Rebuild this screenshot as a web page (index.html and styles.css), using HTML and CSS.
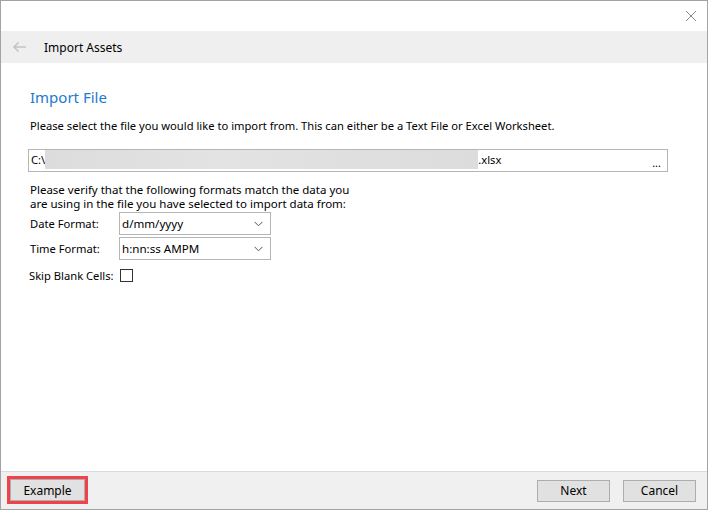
FILE: index.html
```html
<!DOCTYPE html>
<html>
<head>
<meta charset="utf-8">
<link rel="stylesheet" href="styles.css">
</head>
<body>
<div class="window">
  <div class="titlebar">
    <svg class="close" width="12" height="12" viewBox="0 0 12 12"><path d="M1 1 L11 11 M11 1 L1 11" stroke="#8a8a8a" stroke-width="1" fill="none"/></svg>
  </div>
  <div class="header">
    <svg class="back" width="16" height="12" viewBox="0 0 16 12"><path d="M2 6 H14 M6.5 1.5 L2 6 L6.5 10.5" stroke="#c4c4c4" stroke-width="1.6" fill="none"/></svg>
    <span class="htitle">Import Assets</span>
  </div>
  <div class="content">
    <h1 class="heading">Import File</h1>
    <p class="intro">Please select the file you would like to import from. This can either be a Text File or Excel Worksheet.</p>
    <div class="fileinput">
      <span class="ftext first">C:\</span><span class="blur"></span><span class="ftext">.xlsx</span>
      <span class="dots">...</span>
    </div>
    <p class="verify">Please verify that the following formats match the data you<br>are using in the file you have selected to import data from:</p>
    <div class="row">
      <span class="label">Date Format:</span>
      <div class="combo"><span>d/mm/yyyy</span><svg width="9" height="6" viewBox="0 0 9 6"><path d="M0.5 0.8 L4.5 4.8 L8.5 0.8" stroke="#555" stroke-width="1" fill="none"/></svg></div>
    </div>
    <div class="row">
      <span class="label">Time Format:</span>
      <div class="combo"><span>h:nn:ss AMPM</span><svg width="9" height="6" viewBox="0 0 9 6"><path d="M0.5 0.8 L4.5 4.8 L8.5 0.8" stroke="#555" stroke-width="1" fill="none"/></svg></div>
    </div>
    <div class="skip">
      <span class="label2">Skip Blank Cells:</span>
      <span class="check"></span>
    </div>
  </div>
  <div class="footer">
    <div class="hl"><button class="btn">Example</button></div>
    <div class="spacer"></div>
    <button class="btn">Next</button>
    <button class="btn">Cancel</button>
  </div>
</div>
</body>
</html>
```

FILE: styles.css
```css
html, body {
  margin: 0;
  padding: 0;
  background: #ffffff;
}
body {
  font-family: "Noto Sans", "Liberation Sans", sans-serif;
  font-size: 11.2px;
  color: #000;
}
.window {
  width: 706px;
  height: 508px;
  border: 1px solid #a3a3a3;
  display: flex;
  flex-direction: column;
  background: #fff;
}
.titlebar {
  height: 30px;
  display: flex;
  justify-content: flex-end;
  align-items: center;
}
.close {
  margin-right: 10px;
}
.header {
  height: 32px;
  background: #efefef;
  display: flex;
  align-items: center;
}
.back {
  margin-left: 11px;
}
.htitle {
  margin-left: 16px;
  font-size: 12px;
}
.content {
  flex: 1;
  padding: 24px 0 0 29px;
}
.heading {
  margin: 0;
  font-size: 15px;
  font-weight: normal;
  color: #1d79d2;
  line-height: 20px;
}
.intro {
  margin: 11px 0 0 0;
  line-height: 16px;
}
.fileinput {
  margin-top: 15px;
  width: 638px;
  height: 21px;
  border: 1px solid #b5b5b5;
  margin-left: -2px;
  display: flex;
  align-items: flex-start;
}
.ftext {
  line-height: 19px;
}
.ftext.first {
  margin-left: 2px;
}
.blur {
  width: 433px;
  height: 19px;
  background: linear-gradient(90deg, #dcdcdc, #e2e3e2 40%, #dcdcdc);
}
.dots {
  margin-left: auto;
  margin-right: 6px;
  line-height: 25px;
  font-size: 11px;
}
.verify {
  margin: 11px 0 0 0;
  line-height: 14px;
  font-size: 11.5px;
}
.row {
  display: flex;
  align-items: center;
  height: 25px;
}
.label {
  width: 89px;
}
.combo {
  border: 1px solid #b5b5b5;
  display: flex;
  align-items: center;
  justify-content: space-between;
  padding: 0 7px 0 2px;
  box-sizing: border-box;
  width: 152px;
  height: 23px;
  font-size: 11.6px;
}
.skip {
  display: flex;
  align-items: center;
  height: 28px;
}
.label2 {
  margin-left: -1px;
  width: 91px;
}
.check {
  width: 11px;
  height: 11px;
  border: 1px solid #333;
}
.footer {
  height: 37px;
  border-top: 1px solid #dadada;
  background: #f0f0f0;
  display: flex;
  align-items: center;
  padding: 0 11px 0 6px;
}
.hl {
  border: 3px solid #f0424a;
  display: flex;
  margin-top: -1px;
}
.btn {
  font-family: "Noto Sans", "Liberation Sans", sans-serif;
  font-size: 12px;
  width: 73px;
  height: 22px;
  background: #e1e1e1;
  border: 1px solid #adadad;
  padding: 0;
  color: #000;
}
.hl .btn {
  width: 75px;
}
.spacer {
  flex: 1;
}
.btn + .btn {
  margin-left: 13px;
}
```
